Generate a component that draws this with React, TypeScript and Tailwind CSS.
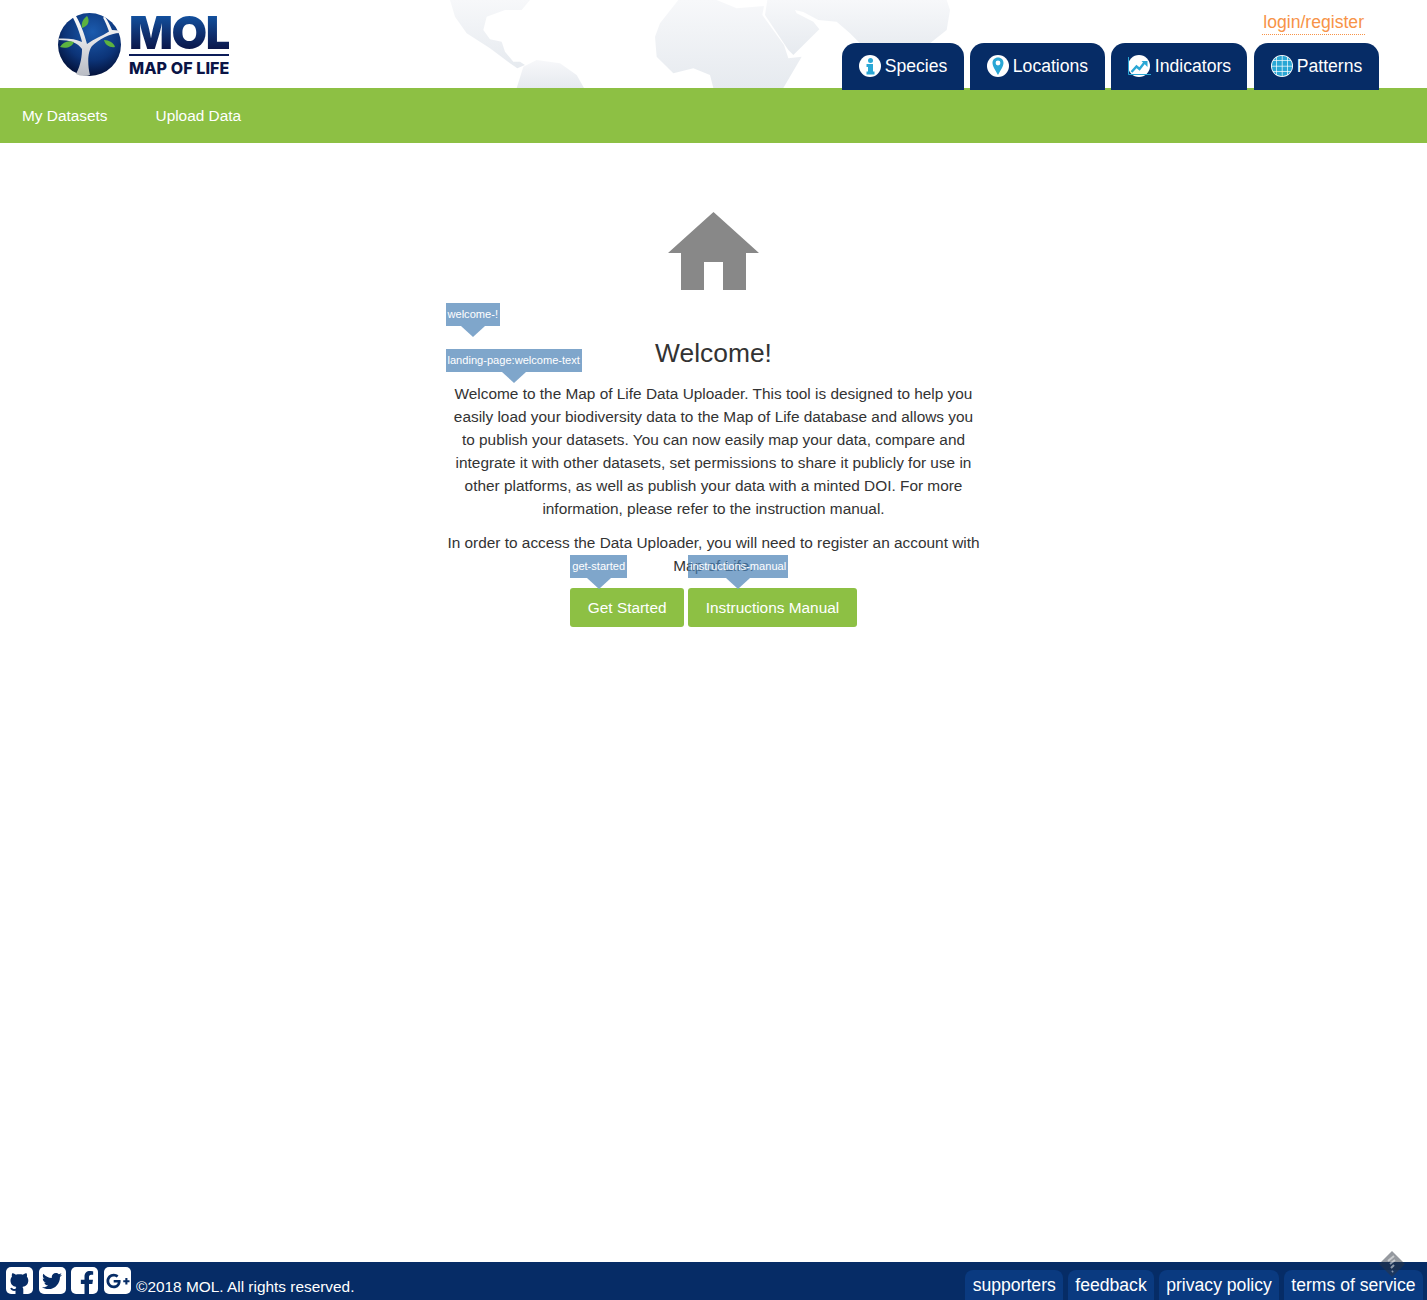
import React from "react";
import { FaTwitter, FaFacebookF, FaGooglePlusG } from "react-icons/fa";

const SpeciesIcon = () => (
	<svg viewBox="0 0 22 22" className="w-[22px] h-[22px]">
		<circle cx="11" cy="11" r="11" fill="#fff" />
		<circle cx="11.500" cy="5.500" r="2.500" fill="#2aa7d5" />
		<path d="M7.500 9h6.500v7.500h1.500V19.500h-8v-3h1.500V12H7.500z" fill="#2aa7d5" />
	</svg>
);

const LocationsIcon = () => (
	<svg viewBox="0 0 22 22" className="w-[22px] h-[22px]">
		<circle cx="11" cy="11" r="11" fill="#fff" />
		<path
			fillRule="evenodd"
			d="M11 2.500c3.200 0 5.500 2.400 5.500 5.400 0 3.400-3.300 7.700-5.500 12-2.200-4.300-5.500-8.600-5.500-12 0-3 2.300-5.400 5.500-5.400zm0 3.100a2.400 2.400 0 100 4.800 2.400 2.400 0 000-4.800z"
			fill="#2aa7d5"
		/>
	</svg>
);

const IndicatorsIcon = () => (
	<svg viewBox="0 0 24 22" className="w-[24px] h-[22px]">
		<circle cx="12" cy="11" r="11" fill="#fff" />
		<path d="M1.500 2v17.500H24" fill="none" stroke="#2aa7d5" strokeWidth="1" />
		<path
			d="M4.500 17l5-5.500 3 2.500 5-6.500"
			fill="none"
			stroke="#2aa7d5"
			strokeWidth="2.400"
		/>
		<path d="M14.500 6H20.500V12z" fill="#2aa7d5" />
	</svg>
);

const PatternsIcon = () => (
	<svg viewBox="0 0 22 22" className="w-[22px] h-[22px]">
		<defs>
			<clipPath id="patternClip">
				<circle cx="11" cy="11" r="10.200" />
			</clipPath>
		</defs>
		<circle cx="11" cy="11" r="11" fill="#fff" />
		<g clipPath="url(#patternClip)" fill="#2aa7d5">
			{[0.500, 6, 11.500, 17].map((x) =>
				[0.500, 6, 11.500, 17].map((y) => (
					<rect key={`${x}-${y}`} x={x} y={y} width="4.800" height="4.800" />
				))
			)}
		</g>
	</svg>
);

const GithubMark = () => (
	<svg viewBox="0 0 27 27" className="w-[27px] h-[27px]">
		<path
			d="M9.500 27v-3.200c-2.200.4-4.200-.2-5.300-2.600l1.700-.5c.8 1.300 2 1.600 3.600 1.200.1-.9.400-1.500.9-1.900C6.500 19.500 4.500 17 4.500 13.600c0-1.500.5-2.800 1.400-3.800-.3-1-.2-2.200.3-3.500 1.300 0 2.500.6 3.600 1.400 2.300-.6 4.900-.6 7.200 0 1.100-.8 2.300-1.400 3.600-1.400.5 1.300.6 2.500.3 3.500.9 1 1.400 2.300 1.400 3.800 0 3.400-2 5.900-5.900 6.400.6.600.9 1.400.9 2.500V27z"
			fill="#062c66"
		/>
	</svg>
);

const WorldMap = () => (
	<svg
		viewBox="0 0 1590 264"
		className="absolute left-[430px] top-0 w-[530px] h-[88px]"
	>
		<defs>
			<linearGradient id="mapFill" x1="0" y1="0" x2="0" y2="1">
				<stop offset="0" stopColor="#f7f8fa" />
				<stop offset="1" stopColor="#e6eaef" />
			</linearGradient>
		</defs>
		<g fill="url(#mapFill)">
			<path d="M60 0L75 50 110 100 180 145 240 190 262 205 285 195 270 185 250 185 225 155 215 125 180 118 160 90 170 50 225 30 275 30 300 0z" />
			<path d="M260 264L280 200 320 180 390 190 440 225 462 264z" />
			<path d="M745 0L690 70 675 110 680 170 730 220 790 205 840 225 850 264 1060 264 1115 170 1075 175 1062 135 997 45 1002 18 920 25 860 0z" />
			<path d="M1012 0L1005 45 1075 150 1090 165 1168 88 1150 65 1100 40 1095 30 1120 36 1165 60 1220 65 1260 100 1290 130 1500 130 1550 90 1560 30 1550 0z" />
		</g>
	</svg>
);

const Logo = () => (
	<div className="flex items-start gap-[8px] ml-[58px] mt-[13px]">
		<svg viewBox="0 0 63 63" className="w-[63px] h-[63px]">
			<defs>
				<radialGradient id="globe" cx="0.55" cy="0.3" r="0.75">
					<stop offset="0" stopColor="#1b5bae" />
					<stop offset="0.6" stopColor="#0c3478" />
					<stop offset="1" stopColor="#020b2e" />
				</radialGradient>
				<linearGradient id="trunk" x1="0" y1="0" x2="0" y2="1">
					<stop offset="0" stopColor="#ffffff" />
					<stop offset="1" stopColor="#b9bcc4" />
				</linearGradient>
			</defs>
			<circle cx="31.500" cy="31.500" r="31.500" fill="url(#globe)" />
			<path
				d="M18 61C23 52 24 42 24 36 20 30 12 27 1 27L1 25.500C10 25 18 26 24 29 22 20 18 10 14 3L17 1.500C22 9 26 20 29 31 36 26 44 23 51 18.500 49 13 47 8 45 4.500L47 4C50 8 52 12 54 17L61 17.500 62 20C52 20 40 27 34 33 30 38 29 50 32 62 27 63.500 22 63 18 61z"
				fill="url(#trunk)"
			/>
			<path d="M24 15c-1-5 1-9 5-12 3 4 2 10-5 12z" fill="#5db33f" />
			<path d="M2 34c3-5 8-7 14-5-2 5-8 7-14 5z" fill="#5db33f" />
			<path d="M46 27c5 0 10 3 11 7-5 1-10-2-11-7z" fill="#5db33f" />
		</svg>
		<div className="flex flex-col w-[100px] font-['Inter',sans-serif]">
			<div className="text-[46px] leading-[38px] font-black tracking-[-1.500px] bg-gradient-to-b from-[#1255a5] to-[#0a1446] bg-clip-text text-transparent">
				MOL
			</div>
			<div className="h-[2px] bg-[#0c1c58] mt-[3px]"></div>
			<div className="text-[16px] leading-[20px] mt-[2px] font-extrabold tracking-[0.1px] whitespace-nowrap text-[#0a1446]">
				MAP OF LIFE
			</div>
		</div>
	</div>
);

const tabs = [
	{ label: "Species", icon: <SpeciesIcon />, width: "w-[122px]" },
	{ label: "Locations", icon: <LocationsIcon />, width: "w-[135px]" },
	{ label: "Indicators", icon: <IndicatorsIcon />, width: "w-[136px] mr-[1px]" },
	{ label: "Patterns", icon: <PatternsIcon />, width: "w-[125px]" },
];

const Tag = ({ label, className }: { label: string; className: string }) => (
	<div className={`absolute flex flex-col items-center ${className}`}>
		<span className="h-[23px] px-[2px] bg-[#4880b5]/70 text-white text-[11.090px] leading-[23px] whitespace-nowrap">
			{label}
		</span>
		<span className="w-0 h-0 border-x-[12px] border-t-[11px] border-x-transparent border-t-[#7fa6cb]"></span>
	</div>
);

const socialIcons = [
	<GithubMark key="github" />,
	<FaTwitter key="twitter" size={20} className="text-[#062c66]" />,
	<FaFacebookF key="facebook" size={23} className="text-[#062c66] mt-[4px] ml-[5px]" />,
	<FaGooglePlusG key="google" size={24} className="text-[#062c66]" />,
];

const footerLinks = ["supporters", "feedback", "privacy policy", "terms of service"];

export default function App() {
	return (
		<div className="min-h-screen flex flex-col bg-white font-['Liberation_Sans',Arial,sans-serif] text-[15.400px] text-[#333]">
			<header className="relative h-[88px] z-10 flex justify-between">
				<WorldMap />
				<div className="relative">
					<Logo />
				</div>
				<div className="relative flex flex-col items-end mr-[48px]">
					<a className="mt-[11px] mr-[14px] text-[17.600px] leading-[23px] text-[#f79347] border-b border-dotted border-[#f79347] px-px">
						login/register
					</a>
					<div className="flex gap-[6px] mt-[8px]">
						{tabs.map((tab) => (
							<div
								key={tab.label}
								className={`${tab.width} h-[47px] flex items-center justify-center gap-[4px] pb-[1px] rounded-t-[14px] bg-[#062c66] text-white text-[17.600px]`}
							>
								{tab.icon}
								<span>{tab.label}</span>
							</div>
						))}
					</div>
				</div>
			</header>

			<nav className="h-[55px] bg-[#8dc044] flex items-center gap-[48px] pl-[22px] pt-[1px] text-white">
				<a>My Datasets</a>
				<a>Upload Data</a>
			</nav>

			<main className="flex-1 flex justify-center pt-[69px]">
				<div className="w-[540px] flex flex-col items-center text-center">
					<svg viewBox="0 0 91 78" className="w-[91px] h-[78px]">
						<path
							d="M45.500 0L91 41H78V78H55V50H36V78H13V41H0z"
							fill="#888"
						/>
					</svg>
					<h3 className="relative self-stretch mt-[49px] text-[26.400px] leading-[29px] font-normal">
						<Tag label="welcome-!" className="left-[2px] -top-[36px]" />
						Welcome!
					</h3>
					<p className="relative self-stretch mt-[14px] px-[3px] leading-[23px]">
						<Tag
							label="landing-page:welcome-text"
							className="left-[2px] -top-[33px]"
						/>
						Welcome to the Map of Life Data Uploader. This tool is designed to
						help you easily load your biodiversity data to the Map of Life
						database and allows you to publish your datasets. You can now easily
						map your data, compare and integrate it with other datasets, set
						permissions to share it publicly for use in other platforms, as well
						as publish your data with a minted DOI. For more information, please
						refer to the instruction manual.
					</p>
					<p className="mt-[11px] leading-[23px]">
						In order to access the Data Uploader, you will need to register an
						account with Map of Life.
					</p>
					<div className="flex gap-[4px] mt-[11px]">
						<button className="relative h-[39px] px-[17.600px] pt-[1px] rounded-[3px] bg-[#8dc044] text-white">
							<Tag label="get-started" className="left-0 -top-[33px]" />
							Get Started
						</button>
						<button className="relative h-[39px] px-[17.600px] pt-[1px] rounded-[3px] bg-[#8dc044] text-white">
							<Tag label="instructions-manual" className="left-0 -top-[33px]" />
							Instructions Manual
						</button>
					</div>
				</div>
			</main>

			<footer className="relative h-[38px] bg-[#062c66] flex justify-between text-white">
				<div className="flex items-start pl-[6px] pt-[5px]">
					<div className="flex gap-[5.700px]">
						{socialIcons.map((icon, i) => (
							<div
								key={i}
								className="w-[27px] h-[27px] rounded-[5px] bg-white flex items-center justify-center overflow-hidden"
							>
								{icon}
							</div>
						))}
					</div>
					<span className="ml-[5px] mt-[10px] leading-[20px]">
						©2018 MOL. All rights reserved.
					</span>
				</div>
				<div className="flex items-end gap-[4.500px] pr-[4px]">
					{footerLinks.map((link) => (
						<a
							key={link}
							className="h-[30px] px-[7.500px] rounded-t-[8px] bg-[#0a3a80] text-[17.600px] leading-[30px]"
						>
							{link}
						</a>
					))}
				</div>
				<svg
					viewBox="0 0 26 26"
					className="absolute right-[22px] -top-[11px] w-[26px] h-[26px]"
				>
					<path d="M13 0L26 13 13 26 0 13z" fill="#2b3440" fillOpacity="0.5" />
					<path
						d="M9 10l6-5M11 13l5-4M12 17l3-3M13 21l1-1"
						stroke="#fff"
						strokeOpacity="0.5"
						strokeWidth="2"
						fill="none"
					/>
				</svg>
			</footer>
		</div>
	);
}
